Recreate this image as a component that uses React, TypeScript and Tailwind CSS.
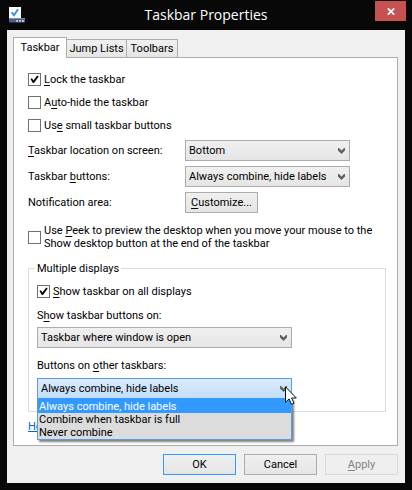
import { useState } from 'react';
import type { ReactNode } from 'react';
import clsx from 'clsx';

const combineOptions = [
  'Always combine, hide labels',
  'Combine when taskbar is full',
  'Never combine',
];

// Underlined access key inside a label
function Key({ children }: { children: string }) {
  return <span className="underline decoration-1 underline-offset-2">{children}</span>;
}

interface CheckProps {
  id: string;
  checked?: boolean;
  children: ReactNode;
}

function Check({ id, checked = false, children }: CheckProps) {
  return (
    <label htmlFor={id} className="flex items-center gap-[3px]">
      <span className="relative h-[13px] w-[13px] shrink-0">
        <input
          id={id}
          type="checkbox"
          defaultChecked={checked}
          className="peer block h-[13px] w-[13px] appearance-none border border-[#707070] bg-white"
        />
        <svg
          viewBox="0 0 13 13"
          className="pointer-events-none absolute inset-0 hidden h-[13px] w-[13px] peer-checked:block"
        >
          <path d="M2.5 6L4 5.2L5.4 7.6L9.2 2.6L10.7 3.4L6 10H4.8Z" fill="#000" />
        </svg>
      </span>
      <span>{children}</span>
    </label>
  );
}

interface DropdownProps {
  id: string;
  options: string[];
  active?: boolean;
}

function Dropdown({ id, options, active = false }: DropdownProps) {
  return (
    <div className="relative">
      <select
        id={id}
        className={clsx(
          'block h-[21px] w-full appearance-none border bg-linear-to-b pl-[3px] pr-5 text-black outline-none',
          active
            ? 'border-[#569de5] from-[#daebfc] to-[#c2dffa]'
            : 'border-[#acacac] from-[#f0f0f0] to-[#e5e5e5]'
        )}
      >
        {options.map((option) => (
          <option key={option}>{option}</option>
        ))}
      </select>
      <svg
        viewBox="0 0 7 6"
        className="pointer-events-none absolute top-2 right-[5px] h-[6px] w-[7px]"
      >
        <path d="M0 0H1L3.5 2.5L6 0H7V2.5L3.5 6L0 2.5Z" fill="#606060" />
      </svg>
    </div>
  );
}

function TitleIcon() {
  return (
    <svg viewBox="0 0 16 16" className="h-4 w-4">
      <rect x="0" y="0" width="12" height="12" fill="#fafcfd" />
      <path d="M2.6 5.2L5 8.2L9 2.2" fill="none" stroke="#2b8fdc" strokeWidth="1.8" />
      <path d="M0 11H16V15.5H0Z" fill="#4d6185" />
      <path d="M0 11H16V12H0Z" fill="#8292ad" />
      <path d="M7 13H9V15H7ZM10 13H12V15H10ZM13 13H15V15H13Z" fill="#aebbd0" />
    </svg>
  );
}

function Pointer() {
  return (
    <svg
      viewBox="0 0 12 19"
      className="pointer-events-none absolute top-2 -right-[5px] z-20 h-[19px] w-[12px]"
    >
      <path
        d="M.5 .8V16.3L4.1 12.9L6.5 18.3L9 17.2L6.6 12H11.3Z"
        fill="#fff"
        stroke="#111"
        strokeWidth="1"
      />
    </svg>
  );
}

export default function App() {
  const [selected, setSelected] = useState(0);

  return (
    <div className="min-h-screen bg-[#080808] px-[7px] pb-[7px] font-['Roboto',sans-serif] text-[11px] leading-[13px] text-black">
      {/* Title bar */}
      <header className="relative flex h-[30px] items-center justify-center">
        <div className="absolute top-[7px] left-[2px]">
          <TitleIcon />
        </div>
        <h1 className="font-['Open_Sans',sans-serif] text-[14px] leading-5 text-white">
          Taskbar Properties
        </h1>
        <button
          aria-label="Close"
          className="absolute top-px -right-px flex h-5 w-[31px] items-center justify-center bg-[#c75050]"
        >
          <svg viewBox="0 0 8 7" className="h-[7px] w-2">
            <path d="M.8 .3L7.2 6.7M7.2 .3L.8 6.7" stroke="#fff" strokeWidth="1.7" />
          </svg>
        </button>
      </header>

      <main className="bg-[#f0f0f0] pt-[7px] pr-[7px] pb-2 pl-[6px]">
        {/* Tabs */}
        <div role="tablist" className="flex items-end">
          <button
            role="tab"
            aria-selected="true"
            className="relative z-10 -mb-px h-[21px] w-[54px] border border-b-0 border-[#acacac] bg-white pb-[2px]"
          >
            Taskbar
          </button>
          <button
            role="tab"
            aria-selected="false"
            className="h-[18px] w-[60px] border border-b-0 border-l-0 border-[#acacac] bg-linear-to-b from-[#f0f0f0] to-[#e5e5e5]"
          >
            Jump Lists
          </button>
          <button
            role="tab"
            aria-selected="false"
            className="h-[18px] w-[51px] border border-b-0 border-l-0 border-[#acacac] bg-linear-to-b from-[#f0f0f0] to-[#e5e5e5]"
          >
            Toolbars
          </button>
        </div>

        <section className="border border-[#acacac] bg-white px-[14px] pt-[15px] pb-3">
          <div className="flex flex-col gap-[10px]">
            <Check id="lock" checked>
              <Key>L</Key>ock the taskbar
            </Check>
            <Check id="autohide">
              A<Key>u</Key>to-hide the taskbar
            </Check>
            <Check id="small">
              Us<Key>e</Key> small taskbar buttons
            </Check>
          </div>

          <div className="mt-2 grid grid-cols-[157px_165px] items-center gap-y-[5px]">
            <label htmlFor="location">
              <Key>T</Key>askbar location on screen:
            </label>
            <Dropdown id="location" options={['Bottom', 'Left', 'Right', 'Top']} />
            <label htmlFor="combine">
              Taskbar <Key>b</Key>uttons:
            </label>
            <Dropdown id="combine" options={combineOptions} />
            <label htmlFor="customize">Notification area:</label>
            <button
              id="customize"
              className="h-[21px] w-[73px] border border-[#acacac] bg-linear-to-b from-[#f0f0f0] to-[#e5e5e5]"
            >
              <Key>C</Key>ustomize...
            </button>
          </div>

          <div className="mt-[11px]">
            <Check id="peek">
              Use <Key>P</Key>eek to preview the desktop when you move your mouse to the
              <br />
              Show desktop button at the end of the taskbar
            </Check>
          </div>

          {/* Multiple displays */}
          <fieldset className="mt-3 mr-[-3px] border border-[#dcdcdc] px-2 pb-3">
            <legend className="-ml-[2px] px-[2px]">Multiple displays</legend>
            <div className="mt-[10px]">
              <Check id="all" checked>
                <Key>S</Key>how taskbar on all displays
              </Check>
            </div>
            <label htmlFor="showOn" className="mt-[11px] mb-[5px] block">
              S<Key>h</Key>ow taskbar buttons on:
            </label>
            <div className="max-w-[255px]">
              <Dropdown
                id="showOn"
                options={['Taskbar where window is open', 'All taskbars']}
              />
            </div>
            <label htmlFor="other" className="mt-[11px] mb-[6px] block">
              Buttons on <Key>o</Key>ther taskbars:
            </label>
            <div className="relative max-w-[255px]">
              <Dropdown id="other" options={combineOptions} active />
              <ul
                role="listbox"
                aria-label="Buttons on other taskbars"
                className="absolute inset-x-0 top-5 z-10 border border-t-0 border-[#569de5] bg-[#dcdcdc] shadow-[2px_2px_2px_#00000080]"
              >
                {combineOptions.map((option, i) => (
                  <li
                    key={option}
                    role="option"
                    aria-selected={i === selected}
                    onMouseEnter={() => setSelected(i)}
                    className={clsx(
                      'px-px first:pt-[2px]',
                      i === selected && 'bg-[#3399ff] text-white'
                    )}
                  >
                    {option}
                  </li>
                ))}
              </ul>
              <Pointer />
            </div>
          </fieldset>

          <a href="#" className="mt-2 inline-block text-[#0066cc] underline">
            Ho
          </a>
        </section>

        {/* Dialog buttons */}
        <div className="mt-2 flex justify-end gap-2">
          <button className="h-[21px] w-[73px] border border-[#3399ff] bg-linear-to-b from-[#f0f0f0] to-[#e5e5e5]">
            OK
          </button>
          <button className="h-[21px] w-[73px] border border-[#acacac] bg-linear-to-b from-[#f0f0f0] to-[#e5e5e5]">
            Cancel
          </button>
          <button
            disabled
            className="h-[21px] w-[73px] border border-[#d9d9d9] bg-[#efefef] text-[#838383]"
          >
            <Key>A</Key>pply
          </button>
        </div>
      </main>
    </div>
  );
}
